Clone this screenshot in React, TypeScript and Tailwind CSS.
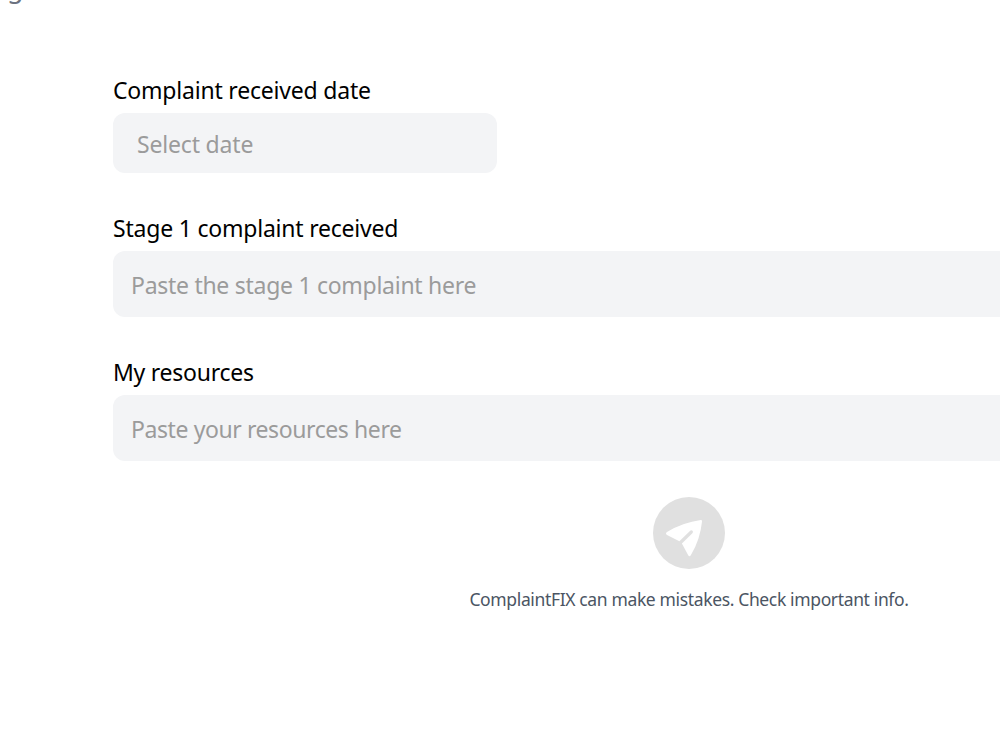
const textFields = [
  { id: 'complaint', label: 'Stage 1 complaint received', labelClass: 'tracking-[-0.21px]', placeholder: 'Paste the stage 1 complaint here', inputClass: 'placeholder:tracking-[-0.28px]' },
  { id: 'resources', label: 'My resources', labelClass: 'tracking-[-0.25px]', placeholder: 'Paste your resources here', inputClass: 'placeholder:tracking-[-0.41px]' },
];

function SendIcon() {
  return (
    <svg width="72" height="72" viewBox="0 0 72 72" fill="none">
      <path d="M14 35 Q30 25.5 47.8 23.1 Q49.2 23 49 24.4 Q47.2 42.5 37.8 58.3 Q36.4 60 35.2 58.3 L28.9 46.6 L39.6 36 Q40.4 34.8 39.5 33.8 Q38.4 32.8 37.2 33.7 L26.4 44.3 L14 38 Q12 36.4 14 35 Z" fill="#fff" />
    </svg>
  );
}

export default function App() {
  return (
    <div className="h-[750px] w-full overflow-hidden bg-white font-['Noto_Sans','Open_Sans',sans-serif]">
      {/* Page heading, scrolled almost out of view */}
      <header className="flex h-[74px] items-start pl-[7px]">
        <span className="-mt-[29px] text-[27px] leading-8 text-[#6b7280]">g</span>
      </header>

      <form className="flex w-[1265px] flex-col pl-[113px]">
        <div className="mb-[38px] flex flex-col gap-[7px]">
          <label htmlFor="date" className="text-[23px] leading-8 tracking-[-0.2px] text-black">Complaint received date</label>
          <input
            id="date"
            placeholder="Select date"
            className="h-[60px] w-96 rounded-xl bg-gray-100 px-6 pt-0.5 text-[23px] outline-none placeholder:tracking-[-0.18px] placeholder:text-[#9b9b9b]"
          />
        </div>

        {textFields.map((field) => (
          <div key={field.id} className="mt-[1px] mb-[38px] flex flex-col gap-[7px]">
            <label htmlFor={field.id} className={`text-[23px] leading-8 text-black ${field.labelClass}`}>{field.label}</label>
            <input
              id={field.id}
              placeholder={field.placeholder}
              className={`h-[66px] w-full rounded-xl bg-gray-100 px-[18px] pt-0.5 text-[23px] outline-none placeholder:text-[#9b9b9b] ${field.inputClass}`}
            />
          </div>
        ))}

        {/* Submit */}
        <div className="-mt-0.5 flex flex-col items-center gap-[18px]">
          <button type="button" aria-label="Send" className="size-[72px] rounded-full bg-[#e0e0e0]">
            <SendIcon />
          </button>
          <p className="text-[17.5px] leading-6 tracking-[-0.36px] text-[#4b5563]">ComplaintFIX can make mistakes. Check important info.</p>
        </div>
      </form>
    </div>
  );
}
